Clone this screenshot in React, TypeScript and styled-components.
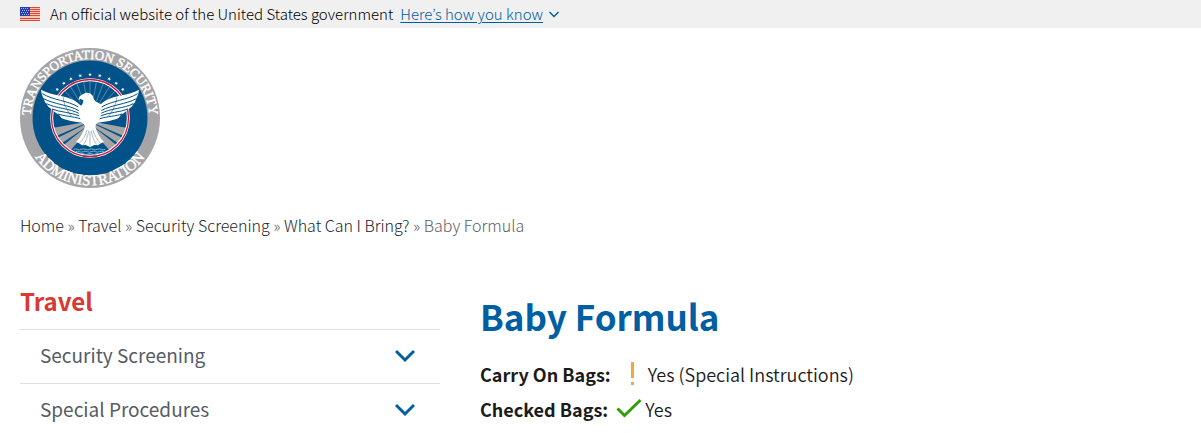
import React from "react";
import styled, { createGlobalStyle } from "styled-components";

const GlobalStyle = createGlobalStyle`
  *, *::before, *::after { box-sizing: border-box; }
  body {
    margin: 0;
    background: #fff;
    color: #1b1b1b;
    font-family: "Source Sans Pro", "Noto Sans CJK KR", "Noto Sans", sans-serif;
    font-size: 18px;
    line-height: 24px;
  }
`;

const Banner = styled.header`
  display: flex;
  align-items: center;
  height: 28px;
  padding: 0 20px;
  background: #f0f0f0;
  font-size: 15px;
  font-weight: 300;
  color: #000;
`;

const Flag = styled.svg`
  width: 20px;
  height: 14px;
  margin-right: 10px;
`;

const BannerButton = styled.button`
  display: flex;
  align-items: center;
  gap: 6px;
  margin-left: 7px;
  padding: 0;
  border: 0;
  background: none;
  color: #005ea2;
  font: inherit;
  cursor: pointer;

  span { text-decoration: underline; text-underline-offset: 2px; }
`;

const Page = styled.div`
  padding: 20px 20px 0;
`;

const HomeLink = styled.a`
  display: block;
  width: 140px;
  height: 140px;
`;

const Seal = styled.svg`
  display: block;
  width: 100%;
  height: 100%;
`;

const Breadcrumbs = styled.nav`
  margin-top: 25px;
  color: #5c6166;
  font-size: 16px;
  font-weight: 300;
`;

const Crumb = styled.a`
  color: #20242b;
  text-decoration: none;
`;

const Columns = styled.div`
  display: grid;
  grid-template-columns: 420px 1fr;
  gap: 40px;
  margin-top: 48px;
`;

const SideTitle = styled.h2`
  margin: 0;
  padding-bottom: 12px;
  color: #d83933;
  font-size: 24px;
  line-height: 32px;
`;

const SideItem = styled.button`
  display: flex;
  align-items: center;
  justify-content: space-between;
  width: 100%;
  height: 54px;
  padding: 0 25px 3px 20px;
  border: 0;
  border-top: 1px solid #dfe1e2;
  background: none;
  color: #565c65;
  font: inherit;
  font-size: 19px;
  cursor: pointer;
`;

const Title = styled.h1`
  margin: 7px 0 16px;
  color: #005ea2;
  font-size: 35px;
  line-height: 48px;
`;

const Rule = styled.p`
  display: flex;
  align-items: center;
  height: 35px;
  margin: 0;
  font-weight: 350;

  strong { font-weight: 700; }
`;

const RuleIcon = styled.svg`
  width: 26px;
  height: 26px;
  margin: 0 3px 0 8px;
`;

const Chevron = ({ size, weight }: { size: number; weight: number }) => (
  <svg width={size} height={size} viewBox="0 0 20 20" fill="none" stroke="#005ea2" strokeWidth={weight} aria-hidden="true">
    <path d="M1 6 L10 15 L19 6" />
  </svg>
);

const UsFlag = () => (
  <Flag viewBox="0 0 20 14" role="img" aria-label="U.S. flag" shapeRendering="crispEdges">
    <rect width="20" height="14" fill="#f6c6bd" />
    {[0, 2, 4, 6, 8, 11, 13].map((y) => (
      <rect key={y} y={y} width="20" height="1" fill="#e2472f" />
    ))}
    <rect width="10" height="9" fill="#253fb5" />
    {[1, 3, 5, 7].map((y) =>
      [1, 3, 5, 7].map((x) => <rect key={`${x}-${y}`} x={x + (y % 4 === 3 ? 1 : 0)} y={y} width="1" height="1" fill="#a5b4e6" />)
    )}
  </Flag>
);

const stars = [-49, -37, -26, -13, 0, 13, 26, 37, 49];
const rays = [-66, -54, -43, -32, -21, -10, 0, 10, 21, 32, 43, 54, 66];

const Wing = () => (
  <g>
    <path
      fill="#fff"
      d="M93 149 C120 166 165 165 192 181 C207 190 214 199 222 205 L234 250 C205 247 177 244 154 234 L146 223 C138 221 131 215 128 208 C119 206 113 199 110 192 C106 189 103 183 102 177 C97 170 94 159 93 149Z"
    />
    <g fill="none" stroke="#005288" strokeWidth="3">
      <path d="M97 161 C130 181 172 181 205 201" />
      <path d="M101 176 C134 194 172 193 207 212" />
      <path d="M110 191 C139 206 177 204 209 221" />
      <path d="M126 207 C150 217 180 216 212 229" />
      <path d="M144 222 C164 229 184 228 214 237" />
      <path d="M160 172 C160 190 172 214 184 228" strokeWidth="1.5" />
    </g>
  </g>
);

const TsaSeal = () => (
  <Seal viewBox="0 0 140 140" role="img" aria-label="Transportation Security Administration seal">
    <defs>
      <path id="ring-top" d="M11.2 78 A59.3 59.3 0 1 1 128.8 78" />
      <path id="ring-bottom" d="M6.3 92 A67.4 67.4 0 0 0 133.7 92" />
    </defs>
    <circle cx="70" cy="70" r="70" fill="#a5a5a7" />
    <circle cx="70" cy="70" r="57.5" fill="#005288" />
    <g fill="#fff" stroke="#fff" strokeWidth=".4" fontFamily="Liberation Serif, serif" fontWeight="400" textAnchor="middle">
      <text fontSize="13"><textPath href="#ring-top" startOffset="50%">TRANSPORTATION SECURITY</textPath></text>
      <text fontSize="15"><textPath href="#ring-bottom" startOffset="50%">ADMINISTRATION</textPath></text>
    </g>
    {stars.map((a) => (
      <path
        key={a}
        transform={`rotate(${a} 70 70) translate(70 26.5)`}
        fill="#fff"
        d="M0 -2 L.5 -.6 L1.9 -.6 L.8 .3 L1.2 1.6 L0 .8 L-1.2 1.6 L-.8 .3 L-1.9 -.6 L-.5 -.6Z"
      />
    ))}
    <g transform="scale(.33333) translate(-30 -24)">
      <g stroke="#7fa3bd" strokeWidth="1.8">
        {rays.map((a) => <path key={a} transform={`rotate(${a} 240 234)`} d="M240 180 V124" />)}
      </g>
      <g fill="#a5a5a7">
        <path d="M225 246 L132 263 Q134 278 139 288 L222 252Z" />
        <path d="M226 253 L142 294 Q147 304 153 311 L232 258Z" />
        <path d="M232 258 L158 317 Q168 327 179 334 L240 264Z" />
        <path d="M255 246 L348 263 Q346 278 341 288 L258 252Z" />
        <path d="M254 253 L338 294 Q333 304 327 311 L248 258Z" />
        <path d="M248 258 L322 317 Q312 327 301 334 L240 264Z" />
      </g>
      <path fill="#005288" d="M196 320 H284 L300 350 H180Z" />
      <circle cx="240" cy="234" r="115" fill="none" stroke="#fff" strokeWidth="9" />
      <circle cx="240" cy="234" r="115.5" fill="none" stroke="#c8193c" strokeWidth="4" />
      <g fill="none" stroke="#75b5d8" strokeWidth="3">
        <path d="M190 328 q6 -3 12 0 t12 0 t12 0 t12 0 t12 0 t12 0 t12 0 t12 0" />
        <path d="M196 335 q6 -3 12 0 t12 0 t12 0 t12 0 t12 0 t12 0 t12 0 t4 0" />
        <path d="M210 342 q6 -3 12 0 t12 0 t12 0 t12 0 t8 0" />
      </g>
      <Wing />
      <g transform="translate(480 0) scale(-1 1)"><Wing /></g>
      <path
        fill="#fff"
        d="M207 180 C205 171 212 166 218 163 C228 154 247 158 250 173 C253 184 263 187 273 192 L274 218 C272 236 262 248 256 257 C258 275 270 292 282 306 L273 310 L264 316 L253 315 L240 321 L227 315 L216 316 L207 310 L198 306 C211 292 222 275 225 257 C216 248 208 236 206 218 L207 202 C216 196 220 190 220 180 L211 177Z"
      />
      <path
        fill="none"
        stroke="#7d8f9d"
        strokeWidth="1.8"
        d="M231 270 C227 286 218 300 208 310 M236 272 C234 288 228 304 220 314 M240 274 V318 M244 272 C246 288 252 304 260 314 M249 270 C253 286 262 300 272 310"
      />
    </g>
  </Seal>
);

const crumbs = ["Home", "Travel", "Security Screening", "What Can I Bring?"];
const sections = ["Security Screening", "Special Procedures"];

export default function App() {
  return (
    <>
      <GlobalStyle />
      <Banner>
        <UsFlag />
        An official website of the United States government
        <BannerButton type="button">
          <span>Here’s how you know</span>
          <Chevron size={10} weight={3} />
        </BannerButton>
      </Banner>
      <Page>
        <HomeLink href="#home"><TsaSeal /></HomeLink>
        <Breadcrumbs aria-label="Breadcrumb">
          {crumbs.map((name) => (
            <React.Fragment key={name}>
              <Crumb href="#">{name}</Crumb>{" » "}
            </React.Fragment>
          ))}
          <span aria-current="page">Baby Formula</span>
        </Breadcrumbs>
        <Columns>
          <nav aria-label="Travel">
            <SideTitle>Travel</SideTitle>
            {sections.map((name) => (
              <SideItem key={name} type="button">
                {name}
                <Chevron size={20} weight={3} />
              </SideItem>
            ))}
          </nav>
          <main>
            <Title>Baby Formula</Title>
            <Rule>
              <strong>Carry On Bags:</strong>
              <RuleIcon viewBox="0 0 26 26" aria-hidden="true">
                <path fill="#f2a93b" d="M12 1h3v16h-3zM12 21h3v3h-3z" />
              </RuleIcon>
              Yes (Special Instructions)
            </Rule>
            <Rule>
              <strong>Checked Bags:</strong>
              <RuleIcon viewBox="0 0 26 26" aria-hidden="true">
                <path fill="none" stroke="#2e9e0b" strokeWidth="3" d="M1.5 12.5 L8.5 19.5 L24.5 4" />
              </RuleIcon>
              Yes
            </Rule>
          </main>
        </Columns>
      </Page>
    </>
  );
}
